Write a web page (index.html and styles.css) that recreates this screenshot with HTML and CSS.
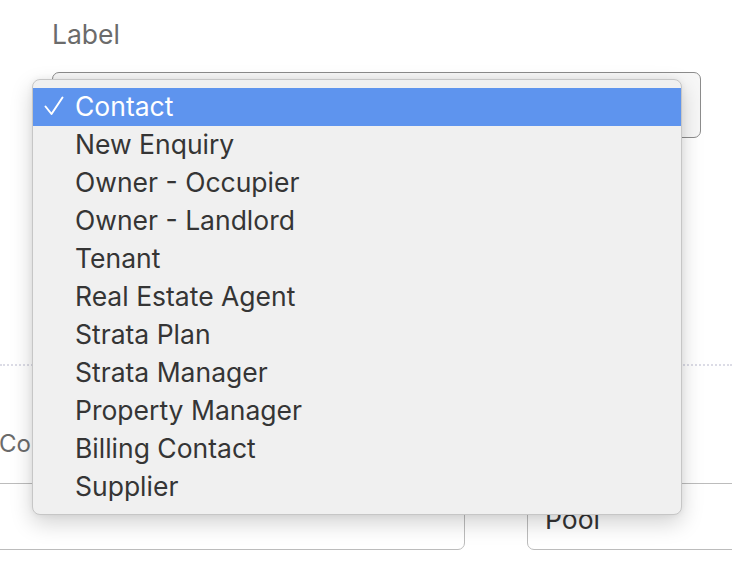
FILE: index.html
```html
<!DOCTYPE html>
<html lang="en">
<head>
    <meta charset="UTF-8">
    <meta name="viewport" content="width=device-width, initial-scale=1.0">
    <title>Contact label</title>
    <link rel="stylesheet" href="styles.css">
</head>
<body>

    <div class="page">
        <div class="field">
            <div class="field-label">Label</div>
            <div class="select">Contact</div>
        </div>

        <div class="divider"></div>

        <div class="row">
            <div class="col">
                <div class="field-label small">Contact</div>
                <div class="input input-left"></div>
            </div>
            <div class="col">
                <div class="field-label small">Type</div>
                <div class="input">Pool</div>
            </div>
        </div>

        <!-- открытый список выбора метки -->
        <ul class="menu">
            <li class="selected">
                <svg class="check" width="20" height="20" viewBox="0 0 20 20">
                    <polyline points="1.5,10.5 7.5,18 18.5,1.5" fill="none" stroke="#fff" stroke-width="2" stroke-linecap="round" stroke-linejoin="round"/>
                </svg>
                Contact
            </li>
            <li>New Enquiry</li>
            <li>Owner - Occupier</li>
            <li>Owner - Landlord</li>
            <li>Tenant</li>
            <li>Real Estate Agent</li>
            <li>Strata Plan</li>
            <li>Strata Manager</li>
            <li>Property Manager</li>
            <li>Billing Contact</li>
            <li>Supplier</li>
        </ul>
    </div>

</body>
</html>
```

FILE: styles.css
```css
body {
    margin: 0;
    font-family: Inter, "Noto Sans", sans-serif;
    background: #fff;
    color: #333;
    overflow: hidden;
}
.page {
    position: relative;
    height: 568px;
}
.field {
    padding: 16px 31px 0 52px;
}
.field-label {
    font-size: 26.5px;
    line-height: 36px;
    color: #6b6b6b;
}
/* подписи нижних полей частично закрыты меню */
.field-label.small {
    font-size: 24px;
    white-space: nowrap;
    overflow: hidden;
    width: 32px;
    margin-left: -1px;
}
.col + .col .field-label.small {
    visibility: hidden;
}
.select {
    margin-top: 20px;
    height: 64px;
    border: 1.5px solid #8c8c8c;
    border-radius: 7px;
    background: #f7f7f7;
    color: transparent;
}
.divider {
    margin-top: 226px;
    border-top: 2px dotted #dcdce6;
}
.row {
    display: grid;
    grid-template-columns: 465px 1fr;
    gap: 62px;
    margin-top: 60px;
}
.input {
    margin-top: 21px;
    border: 1.5px solid #bcbcbc;
    border-radius: 7px;
    width: 300px;
    height: 67px;
    box-sizing: border-box;
    padding-left: 17px;
    font-size: 26.5px;
    line-height: 70px;
    color: #333;
}
.input-left {
    margin-left: -30px;
    width: 495px;
}

/* выпадающее меню */
.menu {
    position: absolute;
    left: 32px;
    top: 79px;
    width: 650px;
    box-sizing: border-box;
    margin: 0;
    padding: 8px 0;
    list-style: none;
    background: #f0f0f0;
    border: 1px solid #c6c6c6;
    border-radius: 8px;
    box-shadow: 0 8px 22px rgba(0, 0, 0, 0.18), 0 0 6px rgba(0, 0, 0, 0.06);
}
.menu li {
    position: relative;
    height: 38px;
    line-height: 37px;
    padding-left: 42px;
    font-size: 26.5px;
    color: #353535;
}
.menu li.selected {
    background: #5e94ee;
    color: #fff;
}
.check {
    position: absolute;
    left: 11px;
    top: 8px;
}
```
